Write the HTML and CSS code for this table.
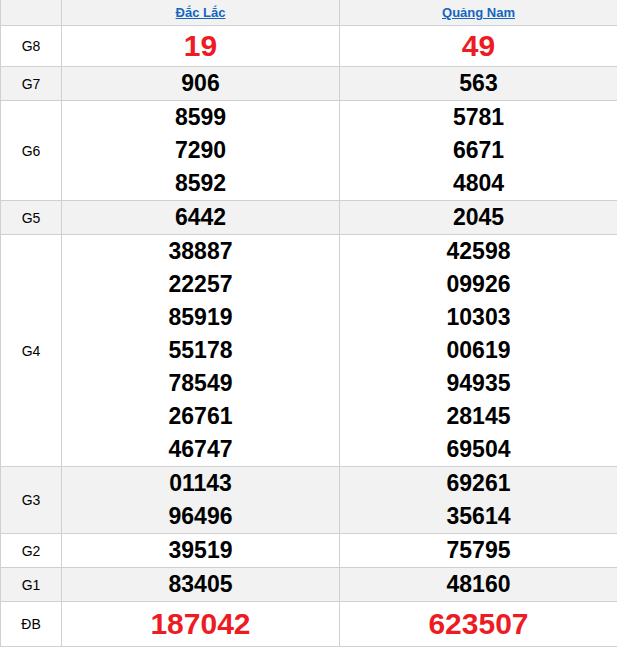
FILE: index.html
```html
<!DOCTYPE html>
<html lang="vi">
<head>
<meta charset="utf-8">
<link rel="stylesheet" href="styles.css">
</head>
<body>
<table class="kq">
  <colgroup><col class="c-label"><col class="c-prov"><col class="c-prov"></colgroup>
  <tr class="hdr">
    <th></th>
    <th><a href="#">Đắc Lắc</a></th>
    <th><a href="#">Quảng Nam</a></th>
  </tr>
  <tr class="w">
    <td class="lbl">G8</td>
    <td><div class="n big red g8">19</div></td>
    <td><div class="n big red g8">49</div></td>
  </tr>
  <tr class="g">
    <td class="lbl">G7</td>
    <td><div class="n">906</div></td>
    <td><div class="n">563</div></td>
  </tr>
  <tr class="w">
    <td class="lbl">G6</td>
    <td><div class="n">8599</div><div class="n">7290</div><div class="n">8592</div></td>
    <td><div class="n">5781</div><div class="n">6671</div><div class="n">4804</div></td>
  </tr>
  <tr class="g">
    <td class="lbl">G5</td>
    <td><div class="n">6442</div></td>
    <td><div class="n">2045</div></td>
  </tr>
  <tr class="w">
    <td class="lbl">G4</td>
    <td>
      <div class="n">38887</div><div class="n">22257</div><div class="n">85919</div><div class="n">55178</div><div class="n">78549</div><div class="n">26761</div><div class="n">46747</div>
    </td>
    <td>
      <div class="n">42598</div><div class="n">09926</div><div class="n">10303</div><div class="n">00619</div><div class="n">94935</div><div class="n">28145</div><div class="n">69504</div>
    </td>
  </tr>
  <tr class="g">
    <td class="lbl">G3</td>
    <td><div class="n">01143</div><div class="n">96496</div></td>
    <td><div class="n">69261</div><div class="n">35614</div></td>
  </tr>
  <tr class="w">
    <td class="lbl">G2</td>
    <td><div class="n">39519</div></td>
    <td><div class="n">75795</div></td>
  </tr>
  <tr class="g">
    <td class="lbl">G1</td>
    <td><div class="n">83405</div></td>
    <td><div class="n">48160</div></td>
  </tr>
  <tr class="w">
    <td class="lbl">ĐB</td>
    <td><div class="n big red db">187042</div></td>
    <td><div class="n big red db">623507</div></td>
  </tr>
</table>
</body>
</html>
```

FILE: styles.css
```css
html, body {
  margin: 0;
  padding: 0;
  background: #fff;
}
body {
  font-family: "Liberation Sans", Arial, sans-serif;
  color: #000;
}
.kq {
  border-collapse: collapse;
  width: 618px;
  margin-top: -1px;
  table-layout: fixed;
}
.c-label { width: 61px; }
.c-prov { width: 278px; }
.kq th, .kq td {
  border: 1px solid #d0d0d0;
  padding: 0;
  text-align: center;
  vertical-align: middle;
}
.hdr th {
  height: 25px;
  background: #f2f2f2;
  font-size: 13px;
  font-weight: bold;
  line-height: 25px;
}
.hdr a {
  color: #1565c0;
  text-decoration: underline;
}
.g { background: #f2f2f2; }
.w { background: #fff; }
.lbl {
  font-size: 14px;
  color: #000;
}
.n {
  font-size: 23px;
  font-weight: bold;
  line-height: 33px;
  height: 33px;
}
.big { font-size: 30px; }
.red { color: #ed1c24; }
.g8 { line-height: 40px; height: 40px; }
.db { line-height: 44px; height: 44px; }
```
